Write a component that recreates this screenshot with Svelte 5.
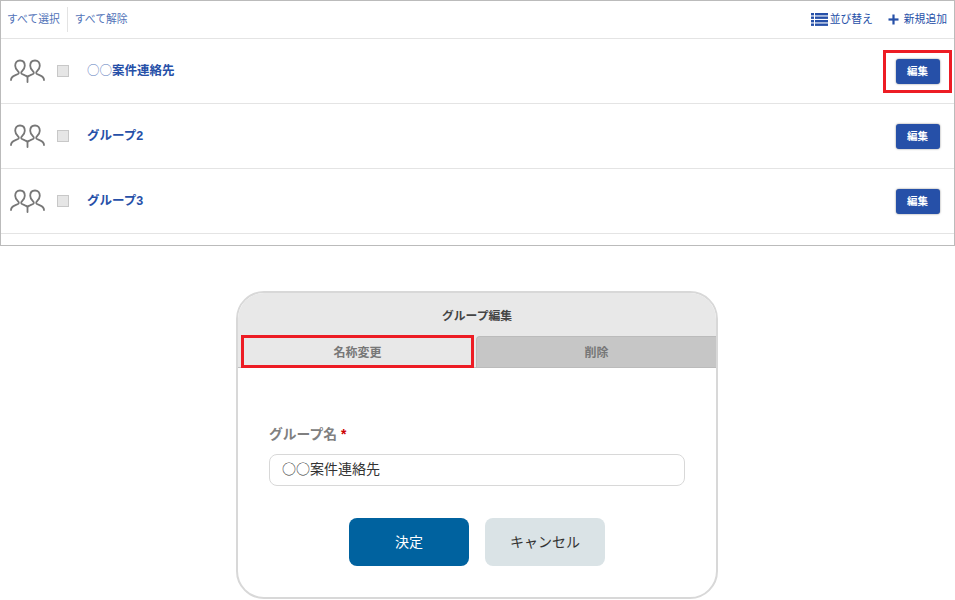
<script>
  const rows = [
    { circles: '○○', name: '案件連絡先', marked: true },
    { circles: '', name: 'グループ2', marked: false },
    { circles: '', name: 'グループ3', marked: false }
  ];
</script>

<div class="page">
  <section class="panel">
    <header class="toolbar">
      <div class="left">
        <span class="tool first">すべて選択</span>
        <span class="tool second">すべて解除</span>
      </div>
      <div class="right">
        <span class="action">
          <svg width="17" height="13" viewBox="0 0 17 13" fill="#2650a8">
            <rect x="0" y="0" width="3" height="2.400" /><rect x="4" y="0" width="13" height="2.400" />
            <rect x="0" y="3.500" width="3" height="2.400" /><rect x="4" y="3.500" width="13" height="2.400" />
            <rect x="0" y="7" width="3" height="2.400" /><rect x="4" y="7" width="13" height="2.400" />
            <rect x="0" y="10.500" width="3" height="2.400" /><rect x="4" y="10.500" width="13" height="2.400" />
          </svg>
          並び替え
        </span>
        <span class="action add">
          <svg width="11" height="11" viewBox="0 0 11 11" fill="#2650a8">
            <rect x="4.400" y="0.500" width="2.200" height="10" /><rect x="0.500" y="4.400" width="10" height="2.200" />
          </svg>
          新規追加
        </span>
      </div>
    </header>
    {#each rows as g}
      <div class="row">
        <svg class="people" width="35" height="24" viewBox="0 0 35 24" fill="none" stroke="#777" stroke-width="1.800" stroke-linecap="round">
          <path d="M1 21c0-2.600 1.600-3.700 4-4.700l3-1.300c1-.6 1-1.600.3-2.500C6.900 10.900 5.200 9.500 5.200 6.700 5.200 3.600 7 1.500 10 1.500s4.800 2.100 4.800 5.200c0 2.800-1.700 4.200-3.100 5.800-.7.900-.7 1.900.3 2.500l3 1.300c1 .4 1.900.8 2.500 1.400" />
          <path d="M34 21c0-2.600-1.600-3.700-4-4.700l-3-1.300c-1-.6-1-1.600-.3-2.500 1.400-1.600 3.100-3 3.100-5.800 0-3.100-1.800-5.200-4.800-5.200s-4.800 2.100-4.800 5.200c0 2.800 1.700 4.200 3.100 5.800.7.900.7 1.900-.3 2.500l-3 1.300c-1 .4-1.900.8-2.500 1.400" />
          <path d="M17.500 18.500v4.500" />
        </svg>
        <span class="check"></span>
        <span class="name"><span class="thin">{g.circles}</span>{g.name}</span>
        <span class="edit-wrap" class:marked={g.marked}>
          <span class="edit">編集</span>
        </span>
      </div>
    {/each}
  </section>

  <section class="dialog">
    <h2>グループ編集</h2>
    <div class="tabs">
      <div class="tab active">名称変更</div>
      <div class="tab">削除</div>
    </div>
    <div class="body">
      <div class="label">グループ名 <span class="req">*</span></div>
      <div class="input"><span class="circle">○○</span>案件連絡先</div>
      <div class="buttons">
        <span class="btn ok">決定</span>
        <span class="btn cancel">キャンセル</span>
      </div>
    </div>
  </section>
</div>

<style>
  :global(body) {
    margin: 0;
    background: #fff;
  }
  .page {
    width: 955px;
    height: 600px;
    overflow: hidden;
    font-family: "Liberation Sans", "Noto Sans CJK JP", sans-serif;
    display: flex;
    flex-direction: column;
  }
  .panel {
    box-sizing: border-box;
    width: 955px;
    height: 246px;
    border: 1px solid #bbb;
    flex: none;
  }
  .toolbar {
    box-sizing: border-box;
    height: 38px;
    border-bottom: 1px solid #e4e4e4;
    display: flex;
    justify-content: space-between;
    align-items: center;
    color: #2650a8;
    font-size: 10.800px;
  }
  .left {
    display: flex;
    align-items: center;
    height: 25px;
  }
  .tool {
    line-height: 25px;
    opacity: 0.8;
  }
  .first {
    padding: 0 7px 0 6px;
    border-right: 1px solid #ddd;
  }
  .second {
    padding-left: 7px;
  }
  .right {
    display: flex;
    align-items: center;
    gap: 15px;
    padding-right: 7px;
  }
  .action {
    display: flex;
    align-items: center;
    gap: 2px;
    line-height: 13px;
  }
  .add {
    gap: 5px;
  }
  .row {
    box-sizing: border-box;
    height: 65px;
    border-bottom: 1px solid #e4e4e4;
    display: flex;
    align-items: center;
    padding-left: 9px;
    padding-bottom: 1px;
  }
  .people {
    flex: none;
  }
  .check {
    box-sizing: border-box;
    width: 12px;
    height: 12px;
    background: #e6e6e6;
    border: 1px solid #c8c8c8;
    margin-left: 12px;
  }
  .name {
    margin-left: 18px;
    font-size: 12.500px;
    font-weight: 700;
    color: #2650a8;
    flex: 1;
    margin-top: -2px;
  }
  .thin {
    font-family: "Noto Sans CJK JP", sans-serif;
    font-weight: 400;
    opacity: 0.75;
  }
  .circle {
    font-family: "Noto Sans CJK JP", sans-serif;
  }
  .edit-wrap {
    box-sizing: border-box;
    width: 69px;
    height: 43px;
    margin: 2px 2px 0 0;
    display: flex;
    align-items: center;
    justify-content: center;
    border: 3px solid transparent;
  }
  .marked {
    border-color: #ed1c24;
  }
  .edit {
    box-sizing: border-box;
    width: 44px;
    height: 25px;
    padding-bottom: 2px;
    border-radius: 3px;
    background: #2650a8;
    color: #fff;
    font-size: 10.500px;
    font-weight: 700;
    display: flex;
    align-items: center;
    justify-content: center;
    box-shadow: 0 0 2px rgba(0, 0, 0, 0.5);
  }
  .dialog {
    box-sizing: border-box;
    width: 482px;
    height: 308px;
    margin: 45px 0 0 236px;
    flex: none;
    border: 2px solid #d8d8d8;
    border-radius: 28px;
    overflow: hidden;
    background: #fff;
  }
  h2 {
    margin: 0;
    height: 42px;
    padding-top: 1px;
    background: #e8e8e8;
    font-size: 11.800px;
    font-weight: 700;
    color: #444;
    text-align: center;
    line-height: 45px;
  }
  .tabs {
    box-sizing: border-box;
    display: flex;
    height: 32px;
    background: #e8e8e8;
    border-bottom: 1px solid #c0c0c0;
    padding-left: 3px;
    gap: 2px;
    color: #777;
    font-size: 12px;
    font-weight: 700;
  }
  .tab {
    box-sizing: border-box;
    height: 32px;
    flex: 1;
    text-align: center;
    line-height: 33px;
    background: #c6c6c6;
    border: 1px solid #bbb;
    border-right: 0;
    border-radius: 4px 0 0 0;
  }
  .tab.active {
    flex: none;
    width: 233px;
    height: 33px;
    margin-top: -1px;
    background: #e8e8e8;
    border: 3px solid #ed1c24;
    border-radius: 0;
    line-height: 31px;
  }
  .body {
    padding: 57px 31px 0;
  }
  .label {
    font-size: 13.800px;
    font-weight: 700;
    color: #808080;
    line-height: 20px;
  }
  .req {
    color: #c00;
  }
  .input {
    box-sizing: border-box;
    height: 32px;
    margin-top: 9px;
    border: 1px solid #d8d8d8;
    border-radius: 8px;
    padding-left: 12px;
    font-size: 14px;
    line-height: 27px;
    color: #333;
  }
  .buttons {
    display: flex;
    justify-content: center;
    gap: 16px;
    margin-top: 32px;
  }
  .btn {
    width: 120px;
    height: 48px;
    border-radius: 8px;
    font-size: 14px;
    text-align: center;
    line-height: 48px;
  }
  .ok {
    background: #00629f;
    color: #fff;
  }
  .cancel {
    background: #dae3e6;
    color: #333;
  }
</style>
